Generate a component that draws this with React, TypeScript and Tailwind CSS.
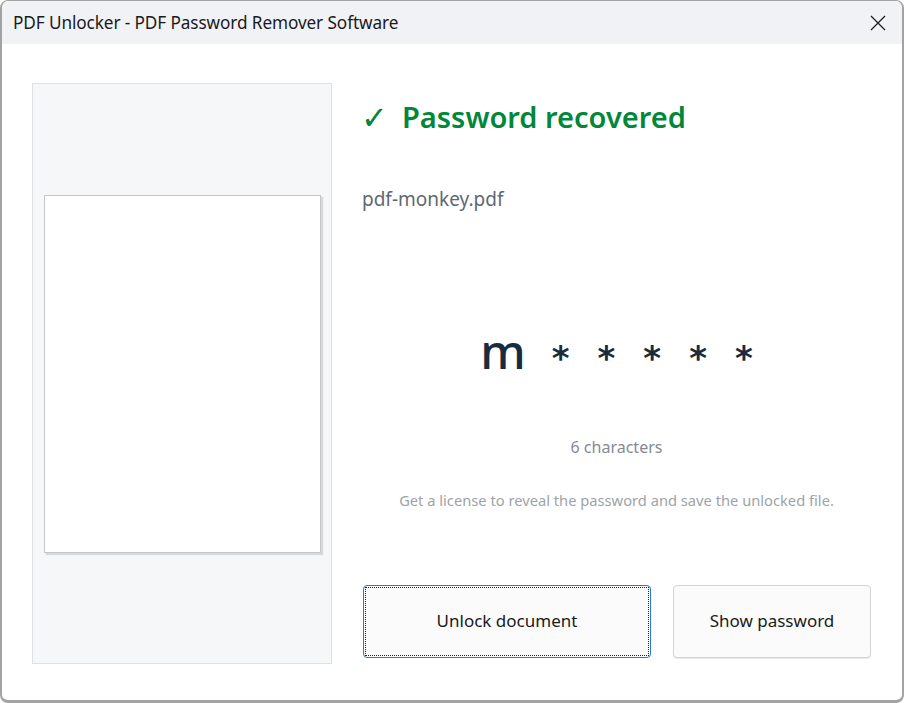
import React from 'react';

const font = { fontFamily: '"Noto Sans", "Open Sans", sans-serif' };

const App: React.FC = () => {
  return (
    <div className="w-[904px] h-[703px] bg-white" style={font}>
      <div className="w-[904px] h-[703px] flex flex-col rounded-[8px] border-x-2 border-t border-b-[3px] border-[#a3a3a3] overflow-hidden bg-white">
        {/* title bar */}
        <div className="h-[43px] shrink-0 bg-[#f1f2f6] flex items-center justify-between pl-[11px] pr-[16px]">
          <span className="text-[17.2px] text-[#1a1a1a] tracking-[-0.1px]">PDF Unlocker - PDF Password Remover Software</span>
          <svg width="16" height="16" viewBox="0 0 16 16" className="text-[#1f1f1f]">
            <path d="M1 1 L15 15 M15 1 L1 15" stroke="currentColor" strokeWidth="1.3" fill="none" />
          </svg>
        </div>

        <div className="flex-1 flex pl-[30px] pt-[39px]">
          {/* preview panel */}
          <div className="w-[300px] h-[581px] bg-[#f6f7f9] border border-[#dfe1e4] flex flex-col pt-[111px] pl-[11px]">
            <div className="w-[277px] h-[358px] bg-white border border-[#c4c6c8] shadow-[2px_2px_1px_rgba(0,0,0,0.12)]" />
          </div>

          {/* content */}
          <div className="flex-1 flex flex-col pl-[30px] pr-[31px]">
            <div className="flex items-center mt-[10px] h-[48px] text-[#00873a] font-semibold text-[29px]">
              <span className="text-[32px] font-normal mr-[14px] ml-[-1px]">✓</span>
              <span>Password recovered</span>
            </div>
            <div className="mt-[44px] text-[19px] text-[#5f6872]">pdf-monkey.pdf</div>

            <div className="mt-[113px] flex items-end justify-center gap-[28px] text-[#1a2b40]">
              <span className="text-[48px] leading-[48px] font-medium mr-[-2px]">m</span>
              {[0, 1, 2, 3, 4].map((i) => (
                <span key={i} className="text-[34px] leading-[34px] font-bold" style={{ fontFamily: '"DejaVu Sans", sans-serif' }}>*</span>
              ))}
            </div>

            <div className="mt-[60px] text-center text-[16px] text-[#858b92]">6 characters</div>
            <div className="mt-[30px] text-center text-[14.7px] text-[#9ea3a8]">Get a license to reveal the password and save the unlocked file.</div>

            <div className="mt-[74px] flex gap-[22px] pl-[1px]">
              <button className="w-[288px] h-[73px] rounded-[4px] border border-[#2a7ac7] bg-[#fbfbfb] p-[1px]">
                <div className="w-full h-full border border-dotted border-[#222] flex items-center justify-center text-[17px] text-[#1a1a1a]">
                  Unlock document
                </div>
              </button>
              <button className="w-[198px] h-[73px] rounded-[4px] border border-[#d3d3d3] bg-[#fbfbfb] flex items-center justify-center text-[17px] text-[#1a1a1a] shadow-[0_1px_0_rgba(0,0,0,0.08)]">
                Show password
              </button>
            </div>
          </div>
        </div>
      </div>
    </div>
  );
};

export default App;
